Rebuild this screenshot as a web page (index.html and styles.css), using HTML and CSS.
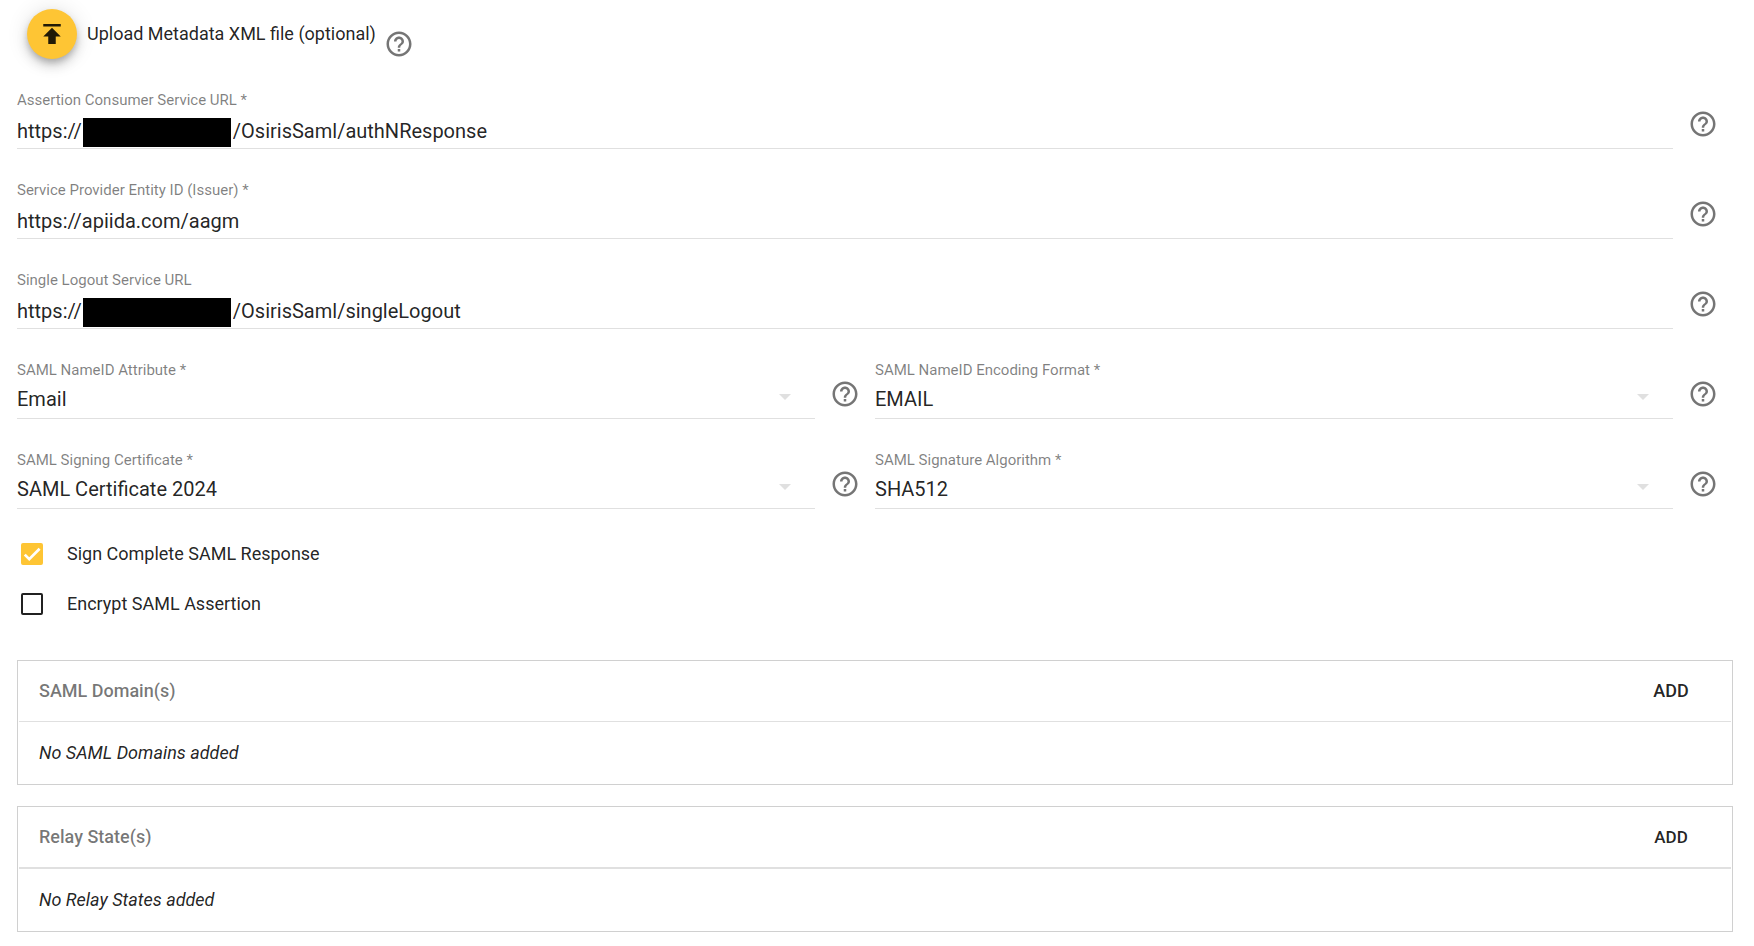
FILE: index.html
```html
<!DOCTYPE html>
<html lang="en">
<head>
    <meta charset="UTF-8">
    <meta name="viewport" content="width=device-width, initial-scale=1.0">
    <title>SAML Configuration</title>
    <link rel="stylesheet" href="styles.css">
</head>
<body>

    <!-- Help icon shared by all fields -->
    <svg class="sprite" aria-hidden="true">
        <symbol id="help" viewBox="0 0 24 24">
            <path d="M11 18h2v-2h-2v2zm1-16C6.48 2 2 6.48 2 12s4.48 10 10 10 10-4.48 10-10S17.52 2 12 2zm0 18c-4.41 0-8-3.59-8-8s3.59-8 8-8 8 3.59 8 8-3.59 8-8 8zm0-14c-2.21 0-4 1.79-4 4h2c0-1.1.9-2 2-2s2 .9 2 2c0 2-3 1.75-3 5h2c0-2.25 3-2.5 3-5 0-2.21-1.79-4-4-4z"/>
        </symbol>
        <symbol id="arrow" viewBox="0 0 12 6">
            <path d="M0 0h12L6 6z"/>
        </symbol>
    </svg>

    <form class="saml-form">
        <div class="upload">
            <button type="button" class="upload-button" id="upload" aria-labelledby="uploadLabel">
                <svg viewBox="0 0 24 24"><path d="M5 4v2h14V4H5zm0 10h4v6h6v-6h4l-7-7-7 7z"/></svg>
            </button>
            <label class="upload-label" id="uploadLabel" for="upload">Upload Metadata XML file (optional)</label>
            <svg class="help"><use href="#help"/></svg>
        </div>

        <div class="fields">
            <div class="form-group wide">
                <div class="field">
                    <label for="acsUrl">Assertion Consumer Service URL *</label>
                    <div class="control">
                        <span>https://</span>
                        <span class="redacted"></span>
                        <input type="text" id="acsUrl" value="/OsirisSaml/authNResponse" required>
                    </div>
                </div>
                <svg class="help"><use href="#help"/></svg>
            </div>

            <div class="form-group wide">
                <div class="field">
                    <label for="entityId">Service Provider Entity ID (Issuer) *</label>
                    <div class="control">
                        <input type="text" id="entityId" value="https://apiida.com/aagm" required>
                    </div>
                </div>
                <svg class="help"><use href="#help"/></svg>
            </div>

            <div class="form-group wide">
                <div class="field">
                    <label for="logoutUrl">Single Logout Service URL</label>
                    <div class="control">
                        <span>https://</span>
                        <span class="redacted"></span>
                        <input type="text" id="logoutUrl" value="/OsirisSaml/singleLogout">
                    </div>
                </div>
                <svg class="help"><use href="#help"/></svg>
            </div>

            <div class="form-group">
                <div class="field">
                    <label for="nameId">SAML NameID Attribute *</label>
                    <div class="control select">
                        <select id="nameId" required><option>Email</option></select>
                        <svg class="arrow"><use href="#arrow"/></svg>
                    </div>
                </div>
                <svg class="help"><use href="#help"/></svg>
            </div>

            <div class="form-group">
                <div class="field">
                    <label for="encoding">SAML NameID Encoding Format *</label>
                    <div class="control select">
                        <select id="encoding" required><option>EMAIL</option></select>
                        <svg class="arrow"><use href="#arrow"/></svg>
                    </div>
                </div>
                <svg class="help"><use href="#help"/></svg>
            </div>

            <div class="form-group">
                <div class="field">
                    <label for="certificate">SAML Signing Certificate *</label>
                    <div class="control select">
                        <select id="certificate" required><option>SAML Certificate 2024</option></select>
                        <svg class="arrow"><use href="#arrow"/></svg>
                    </div>
                </div>
                <svg class="help"><use href="#help"/></svg>
            </div>

            <div class="form-group">
                <div class="field">
                    <label for="algorithm">SAML Signature Algorithm *</label>
                    <div class="control select">
                        <select id="algorithm" required><option>SHA512</option></select>
                        <svg class="arrow"><use href="#arrow"/></svg>
                    </div>
                </div>
                <svg class="help"><use href="#help"/></svg>
            </div>
        </div>

        <div class="checks">
            <div class="check">
                <span class="box">
                    <input type="checkbox" id="signResponse" checked>
                    <svg class="tick" viewBox="0 0 24 24"><path d="M4.1 12.7L9 17.6 20.3 6.3"/></svg>
                </span>
                <label for="signResponse">Sign Complete SAML Response</label>
            </div>
            <div class="check">
                <span class="box">
                    <input type="checkbox" id="encryptAssertion">
                    <svg class="tick" viewBox="0 0 24 24"><path d="M4.1 12.7L9 17.6 20.3 6.3"/></svg>
                </span>
                <label for="encryptAssertion">Encrypt SAML Assertion</label>
            </div>
        </div>

        <div class="panels">
            <section class="panel">
                <div class="panel-header">
                    <h3>SAML Domain(s)</h3>
                    <button type="button" class="add">ADD</button>
                </div>
                <p>No SAML Domains added</p>
            </section>

            <section class="panel relay">
                <div class="panel-header">
                    <h3>Relay State(s)</h3>
                    <button type="button" class="add">ADD</button>
                </div>
                <p>No Relay States added</p>
            </section>
        </div>
    </form>

</body>
</html>
```

FILE: styles.css
```css
* {
    box-sizing: border-box;
}

body {
    margin: 0;
    padding: 9px 21px 14px 17px;
    background-color: #fff;
    color: rgba(0, 0, 0, 0.87);
    font-family: Roboto, sans-serif;
    font-size: 18px;
    line-height: 24px;
}

input, select, button {
    margin: 0;
    padding: 0;
    border: none;
    background: none;
    color: inherit;
    font-family: inherit;
    line-height: inherit;
}

.sprite {
    display: none;
}

/* Upload row */
.upload {
    display: flex;
    align-items: center;
    height: 50px;
    margin-left: 10px;
}

.upload-button {
    display: flex;
    align-items: center;
    justify-content: center;
    width: 50px;
    height: 50px;
    border-radius: 50%;
    background-color: #fec534;
    box-shadow: 0 4px 6px -1px rgba(0, 0, 0, 0.2), 0 7px 12px rgba(0, 0, 0, 0.14), 0 1px 22px rgba(0, 0, 0, 0.12);
    cursor: pointer;
}

.upload-button svg {
    width: 30px;
    height: 30px;
    fill: rgba(0, 0, 0, 0.87);
}

.upload-label {
    margin-left: 10px;
}

.help {
    flex: none;
    width: 30px;
    height: 30px;
    margin: 0 15px;
    fill: #757575;
}

.upload .help {
    align-self: flex-end;
    margin-left: 8px;
}

/* Fields */
.fields {
    display: grid;
    grid-template-columns: 1fr 1fr;
    row-gap: 31px;
    margin-top: 31px;
}

.form-group {
    display: flex;
    align-items: center;
}

.form-group .help {
    margin-top: 9px;
}

.wide {
    grid-column: 1 / -1;
}

.field {
    flex: 1;
    min-width: 0;
}

.field label {
    display: block;
    margin-bottom: 4px;
    color: rgba(0, 0, 0, 0.5);
    font-size: 15px;
    line-height: 20px;
}

.control {
    display: flex;
    align-items: center;
    height: 35px;
    border-bottom: 1px solid #e0e0e0;
    font-size: 20px;
}

.control input,
.control select {
    flex: 1;
    min-width: 0;
    height: 34px;
    font-size: 20px;
    outline: none;
}

.redacted {
    align-self: flex-end;
    width: 148px;
    height: 29px;
    margin: 0 2px 1px 1px;
    background-color: #000;
}

.select {
    display: grid;
}

.select select {
    grid-area: 1 / 1;
    padding-bottom: 5px;
    appearance: none;
}

.arrow {
    grid-area: 1 / 1;
    justify-self: end;
    width: 12px;
    height: 6px;
    margin: 0 24px 9px 0;
    fill: #e0e0e0;
    pointer-events: none;
}

/* Check boxes */
.checks {
    margin: 20px 0 31px 4px;
}

.check {
    display: flex;
    align-items: center;
    height: 50px;
}

.check label {
    padding-left: 24px;
}

.box {
    display: grid;
    width: 22px;
    height: 22px;
}

.box input {
    grid-area: 1 / 1;
    width: 22px;
    height: 22px;
    border: 2px solid #212121;
    border-radius: 2px;
    appearance: none;
}

.box input:checked {
    border-color: #fec534;
    background-color: #fec534;
}

.tick {
    grid-area: 1 / 1;
    width: 22px;
    height: 22px;
    fill: none;
    stroke: #fff;
    stroke-width: 3;
    pointer-events: none;
}

.box input:not(:checked) + .tick {
    visibility: hidden;
}

/* Panels */
.panels {
    display: grid;
    gap: 21px;
}

.panel {
    padding: 0 1px;
    border: 1px solid #d0d0d0;
}

.panel-header {
    display: flex;
    align-items: center;
    justify-content: space-between;
    height: 61px;
    padding: 0 20px;
    border-bottom: 1px solid #e0e0e0;
}

.panel h3 {
    margin: 0;
    color: rgba(0, 0, 0, 0.54);
    font-size: 18px;
    font-weight: 500;
}

.panel p {
    margin: 0;
    padding: 19px 20px;
    font-style: italic;
}

.add {
    width: 80px;
    height: 40px;
    font-size: 18px;
    font-weight: 500;
    cursor: pointer;
}

.relay .panel-header {
    height: 62px;
    border-bottom-width: 2px;
}

.relay .add {
    font-size: 17px;
}
```
